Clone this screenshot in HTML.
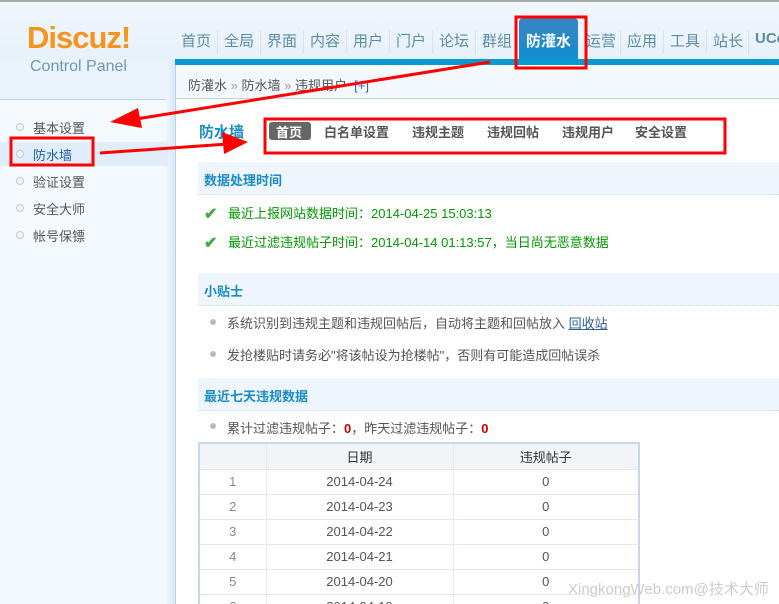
<!DOCTYPE html>
<html><head><meta charset="utf-8"><style>
*{margin:0;padding:0;box-sizing:border-box}
html,body{width:779px;height:604px;overflow:hidden}
body{position:relative;background:#fff;font-family:"Liberation Sans","Noto Sans CJK SC",sans-serif;font-size:12px;color:#333}
.a{position:absolute;white-space:nowrap}
.nav{top:30px;font-size:15px;color:#5b8ca7;}
.sep{position:absolute;top:30px;width:1px;height:24px;background:#fff;border-left:1px solid #d5e3ee}
.side{font-size:13px;color:#555;left:33px}
.dot{position:absolute;left:16px;width:8px;height:8px;border-radius:50%;border:1px solid #c8c8c8;background:#f4f4f4}
.tab{top:122px;font-size:13px;font-weight:bold;color:#555}
.hd{position:absolute;left:198px;width:581px;height:33px;background:#eef5fc;border-bottom:1px dotted #c6dcef;color:#1a8cc5;font-weight:bold;font-size:13px;padding:8px 0 0 6px}
.g{color:#009900;font-size:13px;left:228px}
.b{position:absolute;left:210px;width:6px;height:6px;border-radius:50%;background:#bbb}
table{position:absolute;left:198px;top:442px;border-collapse:collapse;border:2px solid #c9d6e6;font-size:13px}
td{border:1px solid #e3e8f0;height:25px;text-align:center;color:#555}
tr.h td{background:#f2f4f8;color:#333;height:26px}
td.n{color:#888}
</style></head><body>
<div class="a" style="left:0;top:0;width:779px;height:60px;background:linear-gradient(#f0f6fc,#e7f1fa);border-top:2px solid #aaa"></div>
<div class="a" style="left:0;top:60px;width:175px;height:40px;background:#eaf3fb;border-bottom:1px solid #bcd3e3"></div>
<div class="a" style="left:0;top:100px;width:168px;height:504px;background:#f4f9fd"></div>
<div class="a" style="left:166px;top:60px;width:10px;height:544px;background:linear-gradient(90deg,#eef5fb,#d8e9f6);border-right:1px solid #b9d0e2"></div>
<div class="a" style="left:27px;top:20px;font-size:31px;font-weight:bold;color:#f7941d;letter-spacing:-1px">Discuz!</div>
<div class="a" style="left:30px;top:58px;font-size:16px;color:#6a9ab4">Control Panel</div>
<div class="a nav" style="left:181px">首页</div><div class="sep" style="left:217px"></div>
<div class="a nav" style="left:224px">全局</div><div class="sep" style="left:260px"></div>
<div class="a nav" style="left:267px">界面</div><div class="sep" style="left:303px"></div>
<div class="a nav" style="left:310px">内容</div><div class="sep" style="left:346px"></div>
<div class="a nav" style="left:353px">用户</div><div class="sep" style="left:389px"></div>
<div class="a nav" style="left:396px">门户</div><div class="sep" style="left:432px"></div>
<div class="a nav" style="left:439px">论坛</div><div class="sep" style="left:475px"></div>
<div class="a nav" style="left:482px">群组</div>
<div class="a" style="left:519px;top:18px;width:59px;height:44px;background:linear-gradient(#3a84c4,#0f8fcf);border-radius:4px 4px 0 0"></div>
<div class="a nav" style="left:526px;top:30px;color:#fff;font-weight:bold">防灌水</div>
<div class="a nav" style="left:586px">运营</div><div class="sep" style="left:620px"></div>
<div class="a nav" style="left:627px">应用</div><div class="sep" style="left:663px"></div>
<div class="a nav" style="left:670px">工具</div><div class="sep" style="left:706px"></div>
<div class="a nav" style="left:713px">站长</div><div class="sep" style="left:748px"></div>
<div class="a nav" style="left:755px;font-weight:bold">UCe</div>
<div class="a" style="left:175px;top:59px;width:604px;height:6px;background:#069bd0"></div>
<div class="a" style="left:176px;top:69px;width:603px;height:29px;background:#f3f8fc"></div>
<div class="a" style="left:188px;top:75px;font-size:13px;color:#555">防灌水 <span style="color:#999">»</span> 防水墙 <span style="color:#999">»</span> 违规用户 &nbsp;<span style="color:#36c">[+]</span></div>
<div class="a" style="left:176px;top:98px;width:603px;height:1px;background:#bcd3e3"></div>
<div class="a" style="left:0;top:142px;width:168px;height:24px;background:#dfeefa"></div>
<div class="dot" style="top:123px"></div><div class="a side" style="top:118px">基本设置</div>
<div class="dot" style="top:150px"></div><div class="a side" style="top:145px;color:#1f5f9e">防水墙</div>
<div class="dot" style="top:177px"></div><div class="a side" style="top:172px">验证设置</div>
<div class="dot" style="top:204px"></div><div class="a side" style="top:199px">安全大师</div>
<div class="dot" style="top:231px"></div><div class="a side" style="top:226px">帐号保镖</div>
<div class="a" style="left:199px;top:121px;font-size:15px;font-weight:bold;color:#1a8cc5">防水墙</div>
<div class="a" style="left:269px;top:122px;width:42px;height:18px;background:#666;border-radius:3px"></div>
<div class="a tab" style="left:276px;color:#fff">首页</div>
<div class="a tab" style="left:324px">白名单设置</div>
<div class="a tab" style="left:412px">违规主题</div>
<div class="a tab" style="left:487px">违规回帖</div>
<div class="a tab" style="left:562px">违规用户</div>
<div class="a tab" style="left:635px">安全设置</div>
<div class="hd" style="top:162px">数据处理时间</div>
<div class="a" style="left:204px;top:204px;color:#4a4;font-size:16px;font-weight:bold">✔</div>
<div class="a g" style="top:203px">最近上报网站数据时间：2014-04-25 15:03:13</div>
<div class="a" style="left:204px;top:233px;color:#4a4;font-size:16px;font-weight:bold">✔</div>
<div class="a g" style="top:232px">最近过滤违规帖子时间：2014-04-14 01:13:57，当日尚无恶意数据</div>
<div class="hd" style="top:273px">小贴士</div>
<div class="b" style="top:319px"></div>
<div class="a" style="left:227px;top:313px;font-size:13px;color:#555">系统识别到违规主题和违规回帖后，自动将主题和回帖放入 <span style="color:#2a5f96;text-decoration:underline">回收站</span></div>
<div class="b" style="top:351px"></div>
<div class="a" style="left:227px;top:345px;font-size:13px;color:#555">发抢楼贴时请务必"将该帖设为抢楼帖"，否则有可能造成回帖误杀</div>
<div class="hd" style="top:378px">最近七天违规数据</div>
<div class="b" style="top:423px"></div>
<div class="a" style="left:227px;top:418px;font-size:13px;color:#555">累计过滤违规帖子：<b style="color:#c00">0</b>，昨天过滤违规帖子：<b style="color:#c00">0</b></div>
<table>
<tr class="h"><td style="width:67px"></td><td style="width:187px">日期</td><td style="width:186px">违规帖子</td></tr>
<tr><td class="n">1</td><td>2014-04-24</td><td>0</td></tr>
<tr><td class="n">2</td><td>2014-04-23</td><td>0</td></tr>
<tr><td class="n">3</td><td>2014-04-22</td><td>0</td></tr>
<tr><td class="n">4</td><td>2014-04-21</td><td>0</td></tr>
<tr><td class="n">5</td><td>2014-04-20</td><td>0</td></tr>
<tr><td class="n">6</td><td>2014-04-19</td><td>0</td></tr>
</table>
<div class="a" style="left:568px;top:578px;font-size:15px;color:#ccc">XingkongWeb.com@技术大师</div>
<svg class="a" style="left:0;top:0" width="779" height="604">
<g fill="none" stroke="#f00" stroke-width="3">
<rect x="516" y="17" width="70" height="51"/>
<rect x="265" y="119" width="460" height="34"/>
<rect x="11" y="138" width="82" height="27"/>
</g>
<line x1="490" y1="62" x2="130" y2="120" stroke="#f00" stroke-width="3"/>
<polygon points="110,122 138,108 142,128" fill="#f00"/>
<line x1="100" y1="153" x2="228" y2="144" stroke="#f00" stroke-width="3"/>
<polygon points="248,142 222,132 224,154" fill="#f00"/>
</svg>
</body></html>
